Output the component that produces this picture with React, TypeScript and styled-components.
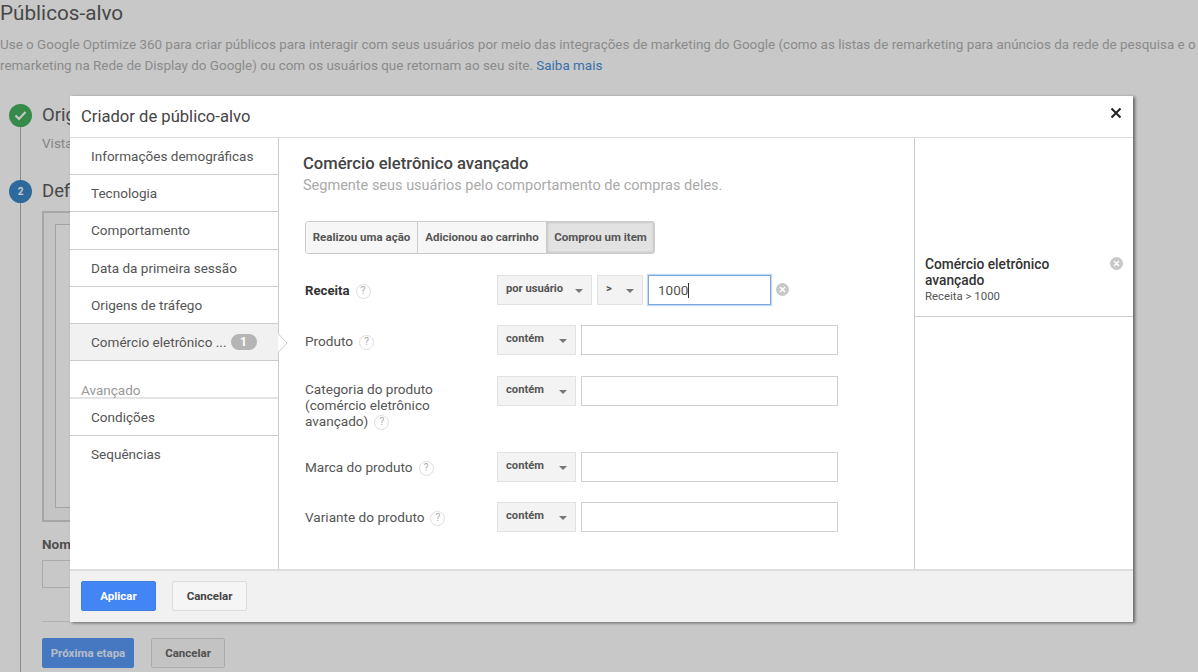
import React from "react";
import styled, { createGlobalStyle } from "styled-components";

const Global = createGlobalStyle`
  html, body { margin: 0; padding: 0; background: #fff; }
  body { font-family: Roboto, "Liberation Sans", sans-serif; color: #444; }
  * { box-sizing: border-box; }
`;

const Page = styled.div`
  position: relative;
  width: 1198px;
  height: 672px;
  overflow: hidden;
`;

const PageTitle = styled.h1`
  margin: 0;
  padding-top: 1px;
  font-size: 20.7px;
  line-height: 24px;
  font-weight: 400;
  color: #5c5c5c;
`;

const Intro = styled.p`
  margin: 9px 0 0;
  font-size: 13.45px;
  line-height: 21px;
  color: #b2b2b2;
  white-space: nowrap;
  a { color: #4a90d9; text-decoration: none; }
`;

const Steps = styled.div`
  position: relative;
  margin: 27px 0 0 9px;
  padding-left: 33px;
  height: 585px;
  &::before {
    content: "";
    position: absolute;
    left: 11px;
    top: 20px;
    bottom: 0;
    width: 1px;
    background: #b0b0b0;
  }
`;

const StepHead = styled.div`
  position: relative;
  font-size: 18.5px;
  line-height: 24px;
  color: #5c5c5c;
`;

const StepDot = styled.span<{ $c: string }>`
  position: absolute;
  left: -33px;
  top: 1px;
  width: 23px;
  height: 23px;
  border-radius: 50%;
  background: ${(p) => p.$c};
  color: #fff;
  display: flex;
  align-items: center;
  justify-content: center;
  font-size: 10px;
  font-weight: 700;
`;

const StepNote = styled.div`
  margin-top: 7px;
  font-size: 13.5px;
  line-height: 18px;
  color: #aaa;
  margin-bottom: 27px;
`;

const OuterBox = styled.div`
  margin-top: 8px;
  height: 311px;
  width: 300px;
  background: #fafafa;
  border: 2px solid #d4d4d4;
  padding: 11px 0 12px 11px;
`;

const InnerBox = styled.div`
  height: 100%;
  background: #fff;
  border: 1px solid #d0d0d0;
`;

const NameLabel = styled.div`
  margin-top: 13px;
  font-size: 13.5px;
  line-height: 18px;
  font-weight: 700;
  color: #666;
`;

const NameInput = styled.div`
  margin-top: 7px;
  width: 300px;
  height: 28px;
  border: 1px solid #d8d8d8;
`;

const Rule = styled.div`
  margin-top: 33px;
  width: 300px;
  height: 1px;
  background: #e2e2e2;
`;

const PageActions = styled.div`
  margin-top: 16px;
  display: flex;
  gap: 17px;
`;

const Btn = styled.button<{ $primary?: boolean; $w: number }>`
  width: ${(p) => p.$w}px;
  height: 30px;
  padding: 0;
  border-radius: 2px;
  border: 1px solid ${(p) => (p.$primary ? "#3f7fe0" : "#dcdcdc")};
  background: ${(p) => (p.$primary ? "#4285f4" : "#f5f5f5")};
  color: ${(p) => (p.$primary ? "#fff" : "#444")};
  font: 700 11.5px Roboto, "Liberation Sans", sans-serif;
`;

const NextBtn = styled(Btn)`
  background: #5a9af8;
  border-color: #5a9af8;
  color: #e6f0ff;
`;

const BackBtn = styled(Btn)`
  background: #f9f9f9;
  color: #666;
`;

const Backdrop = styled.div`
  position: absolute;
  inset: 0;
  background: rgba(0, 0, 0, 0.215);
`;

const Modal = styled.div`
  position: absolute;
  left: 70px;
  top: 96px;
  width: 1063px;
  height: 526px;
  background: #fff;
  display: flex;
  flex-direction: column;
  box-shadow: 2px 1px 3px rgba(0, 0, 0, 0.5);
`;

const ModalHead = styled.div`
  position: relative;
  flex: 0 0 42px;
  display: flex;
  align-items: center;
  padding-left: 11px;
  font-size: 16.6px;
  color: #444;
  border-bottom: 1px solid #ddd;
`;

const Close = styled.svg`
  position: absolute;
  right: 11px;
  top: 11px;
  width: 12px;
  height: 12px;
`;

const ModalBody = styled.div`
  flex: 1;
  display: flex;
  min-height: 0;
`;

const Nav = styled.nav`
  flex: 0 0 209px;
  border-right: 1px solid #ccc;
  position: relative;
`;

const NavItem = styled.div<{ $active?: boolean; $plain?: boolean }>`
  height: 37.2px;
  display: flex;
  align-items: center;
  padding: 0 21px;
  font-size: 13.55px;
  color: #555;
  background: ${(p) => (p.$active ? "#f1f1f1" : "#fff")};
  border-bottom: 1px solid ${(p) => (p.$plain ? "transparent" : "#ccc")};
  white-space: nowrap;
`;

const NavBadge = styled.span`
  margin-left: 4px;
  width: 26px;
  height: 16px;
  border-radius: 8px;
  background: #b5b5b5;
  color: #fff;
  font-size: 12px;
  font-weight: 700;
  display: flex;
  align-items: center;
  justify-content: center;
`;

const NavCaret = styled.svg`
  position: absolute;
  left: 208px;
  top: 195px;
  width: 10px;
  height: 20px;
`;

const NavHeading = styled.div`
  margin-top: 20px;
  padding-left: 11px;
  height: 18px;
  font-size: 13.5px;
  line-height: 18px;
  color: #999;
  border-bottom: 2px solid #e4e4e4;
`;

const Main = styled.div`
  flex: 1;
  padding: 16px 0 0 24px;
`;

const MainTitle = styled.h2`
  margin: 0;
  font-size: 16.6px;
  line-height: 20px;
  font-weight: 500;
  color: #444;
`;

const MainSub = styled.div`
  margin-top: 3px;
  font-size: 14.5px;
  line-height: 18px;
  color: #aaa;
`;

const Tabs = styled.div`
  margin: 26px 0 21px 2px;
  display: inline-flex;
  height: 33px;
  border: 1px solid #ccc;
  border-radius: 3px;
  overflow: hidden;
`;

const Tab = styled.div<{ $on?: boolean; $w: number }>`
  width: ${(p) => p.$w}px;
  display: flex;
  align-items: center;
  justify-content: center;
  padding-bottom: 2px;
  font-size: 11.5px;
  font-weight: 700;
  color: #555;
  background: ${(p) => (p.$on ? "#e2e2e2" : "#f6f6f6")};
  box-shadow: ${(p) => (p.$on ? "inset 0 0 3px rgba(0,0,0,.25)" : "none")};
  & + & { border-left: 1px solid #ccc; }
`;

const Fields = styled.div`
  display: flex;
  flex-direction: column;
  padding-left: 2px;
`;

const Field = styled.div<{ $h: number }>`
  display: grid;
  grid-template-columns: 192px 1fr;
  height: ${(p) => p.$h}px;
`;

const FieldLabel = styled.div<{ $strong?: boolean; $top: number }>`
  font-size: ${(p) => (p.$strong ? 13.2 : 13.6)}px;
  line-height: 16px;
  padding-top: ${(p) => p.$top}px;
  width: 165px;
  color: ${(p) => (p.$strong ? "#333" : "#555")};
  font-weight: ${(p) => (p.$strong ? 700 : 400)};
`;

const Help = styled.span`
  display: inline-flex;
  align-items: center;
  justify-content: center;
  margin-left: 6px;
  width: 15px;
  height: 15px;
  border: 1px solid #ddd;
  border-radius: 50%;
  font-size: 10px;
  font-weight: 400;
  color: #aaa;
  vertical-align: 1px;
`;

const Controls = styled.div`
  display: flex;
  align-items: flex-start;
  gap: 5px;
`;

const Select = styled.div<{ $w: number }>`
  width: ${(p) => p.$w}px;
  height: 30px;
  flex: none;
  display: flex;
  align-items: center;
  justify-content: space-between;
  padding: 0 8px 4px 8px;
  background: #f3f3f3;
  border: 1px solid #e2e2e2;
  font-size: 11.2px;
  font-weight: 700;
  color: #555;
  &::after {
    content: "";
    border: 4px solid transparent;
    border-top-color: #777;
    border-bottom: 0;
    margin-top: 5px;
  }
`;

const TextBox = styled.div<{ $w: number; $focus?: boolean }>`
  width: ${(p) => p.$w}px;
  height: 30px;
  flex: none;
  display: flex;
  align-items: center;
  padding-left: 9px;
  font-size: 13.5px;
  color: #555;
  border: 1px solid ${(p) => (p.$focus ? "#7aa7dc" : "#d0d0d0")};
  box-shadow: ${(p) => (p.$focus ? "0 0 1px 1px #c4d9f2" : "none")};
`;

const Caret = styled.span`
  width: 1px;
  height: 15px;
  background: #333;
`;

const ClearIcon = styled.svg`
  width: 13px;
  height: 13px;
  flex: none;
`;

const RowClear = styled.span`
  display: flex;
  margin-top: 8px;
`;

const Side = styled.aside`
  flex: 0 0 219px;
  border-left: 1px solid #ccc;
  padding-top: 118px;
`;

const Card = styled.div`
  position: relative;
  padding: 0 10px 6px 10px;
  height: 61px;
  border-bottom: 1px solid #ccc;
`;

const CardTitle = styled.div`
  width: 150px;
  font-size: 13.75px;
  line-height: 16px;
  font-weight: 500;
  color: #333;
`;

const CardText = styled.div`
  font-size: 11.4px;
  line-height: 16px;
  color: #555;
`;

const CardClear = styled.span`
  position: absolute;
  right: 10px;
  top: 1px;
  display: flex;
`;

const Foot = styled.div`
  flex: 0 0 53px;
  display: flex;
  align-items: center;
  gap: 16px;
  padding: 0 0 2px 11px;
  background: #f1f1f1;
  border-top: 2px solid #ddd;
`;

const Clear = () => (
  <ClearIcon viewBox="0 0 13 13">
    <circle cx="6.5" cy="6.5" r="6.5" fill="#c8c8c8" />
    <path d="M4 4l5 5M9 4l-5 5" stroke="#fff" strokeWidth="1.4" />
  </ClearIcon>
);

const rows = [
  { label: "Produto", h: 51, top: 8 },
  { label: "Categoria do produto (comércio eletrônico avançado)", h: 76, top: 5 },
  { label: "Marca do produto", h: 50, top: 7 },
  { label: "Variante do produto", h: 50, top: 7 },
];

const navTop = ["Informações demográficas", "Tecnologia", "Comportamento", "Data da primeira sessão", "Origens de tráfego"];

export default function App() {
  return (
    <Page>
      <Global />
      <PageTitle>Públicos-alvo</PageTitle>
      <Intro>
        Use o Google Optimize 360 para criar públicos para interagir com seus usuários por meio das integrações de marketing do Google (como as listas de remarketing para anúncios da rede de pesquisa e o
        <br />
        remarketing na Rede de Display do Google) ou com os usuários que retornam ao seu site. <a href="#s">Saiba mais</a>
      </Intro>
      <Steps>
        <StepHead>
          <StepDot $c="#45b25f">
            <svg width="13" height="11" viewBox="0 0 13 11">
              <path d="M1.5 5.5l3.5 3.5 6.5-7" fill="none" stroke="#fff" strokeWidth="2" />
            </svg>
          </StepDot>
          Origem
        </StepHead>
        <StepNote>Vista</StepNote>
        <StepHead>
          <StepDot $c="#3b87c8">2</StepDot>
          Definir
        </StepHead>
        <OuterBox>
          <InnerBox />
        </OuterBox>
        <NameLabel>Nome</NameLabel>
        <NameInput />
        <Rule />
        <PageActions>
          <NextBtn $primary $w={92}>Próxima etapa</NextBtn>
          <BackBtn $w={74}>Cancelar</BackBtn>
        </PageActions>
      </Steps>
      <Backdrop />
      <Modal>
        <ModalHead>
          Criador de público-alvo
          <Close viewBox="0 0 12 12">
            <path d="M1.5 1.5l9 9M10.5 1.5l-9 9" stroke="#222" strokeWidth="2" />
          </Close>
        </ModalHead>
        <ModalBody>
          <Nav>
            {navTop.map((n) => (
              <NavItem key={n}>{n}</NavItem>
            ))}
            <NavItem $active>
              Comércio eletrônico ...
              <NavBadge>1</NavBadge>
            </NavItem>
            <NavCaret viewBox="0 0 10 20">
              <path d="M0 0.5L9 10 0 19.5z" fill="#fff" />
              <path d="M0 0.5L9 10 0 19.5" fill="none" stroke="#ccc" />
            </NavCaret>
            <NavHeading>Avançado</NavHeading>
            <NavItem>Condições</NavItem>
            <NavItem $plain>Sequências</NavItem>
          </Nav>
          <Main>
            <MainTitle>Comércio eletrônico avançado</MainTitle>
            <MainSub>Segmente seus usuários pelo comportamento de compras deles.</MainSub>
            <Tabs>
              <Tab $w={111}>Realizou uma ação</Tab>
              <Tab $w={129}>Adicionou ao carrinho</Tab>
              <Tab $w={108} $on>Comprou um item</Tab>
            </Tabs>
            <Fields>
              <Field $h={50}>
                <FieldLabel $strong $top={8}>
                  Receita<Help>?</Help>
                </FieldLabel>
                <Controls>
                  <Select $w={95}>por usuário</Select>
                  <Select $w={46}>&gt;</Select>
                  <TextBox $w={123} $focus>
                    1000<Caret />
                  </TextBox>
                  <RowClear>
                    <Clear />
                  </RowClear>
                </Controls>
              </Field>
              {rows.map((r) => (
                <Field key={r.label} $h={r.h}>
                  <FieldLabel $top={r.top}>
                    {r.label}
                    <Help>?</Help>
                  </FieldLabel>
                  <Controls>
                    <Select $w={79}>contém</Select>
                    <TextBox $w={257} />
                  </Controls>
                </Field>
              ))}
            </Fields>
          </Main>
          <Side>
            <Card>
              <CardTitle>Comércio eletrônico avançado</CardTitle>
              <CardText>Receita &gt; 1000</CardText>
              <CardClear>
                <Clear />
              </CardClear>
            </Card>
          </Side>
        </ModalBody>
        <Foot>
          <Btn $primary $w={75}>Aplicar</Btn>
          <Btn $w={75}>Cancelar</Btn>
        </Foot>
      </Modal>
    </Page>
  );
}
